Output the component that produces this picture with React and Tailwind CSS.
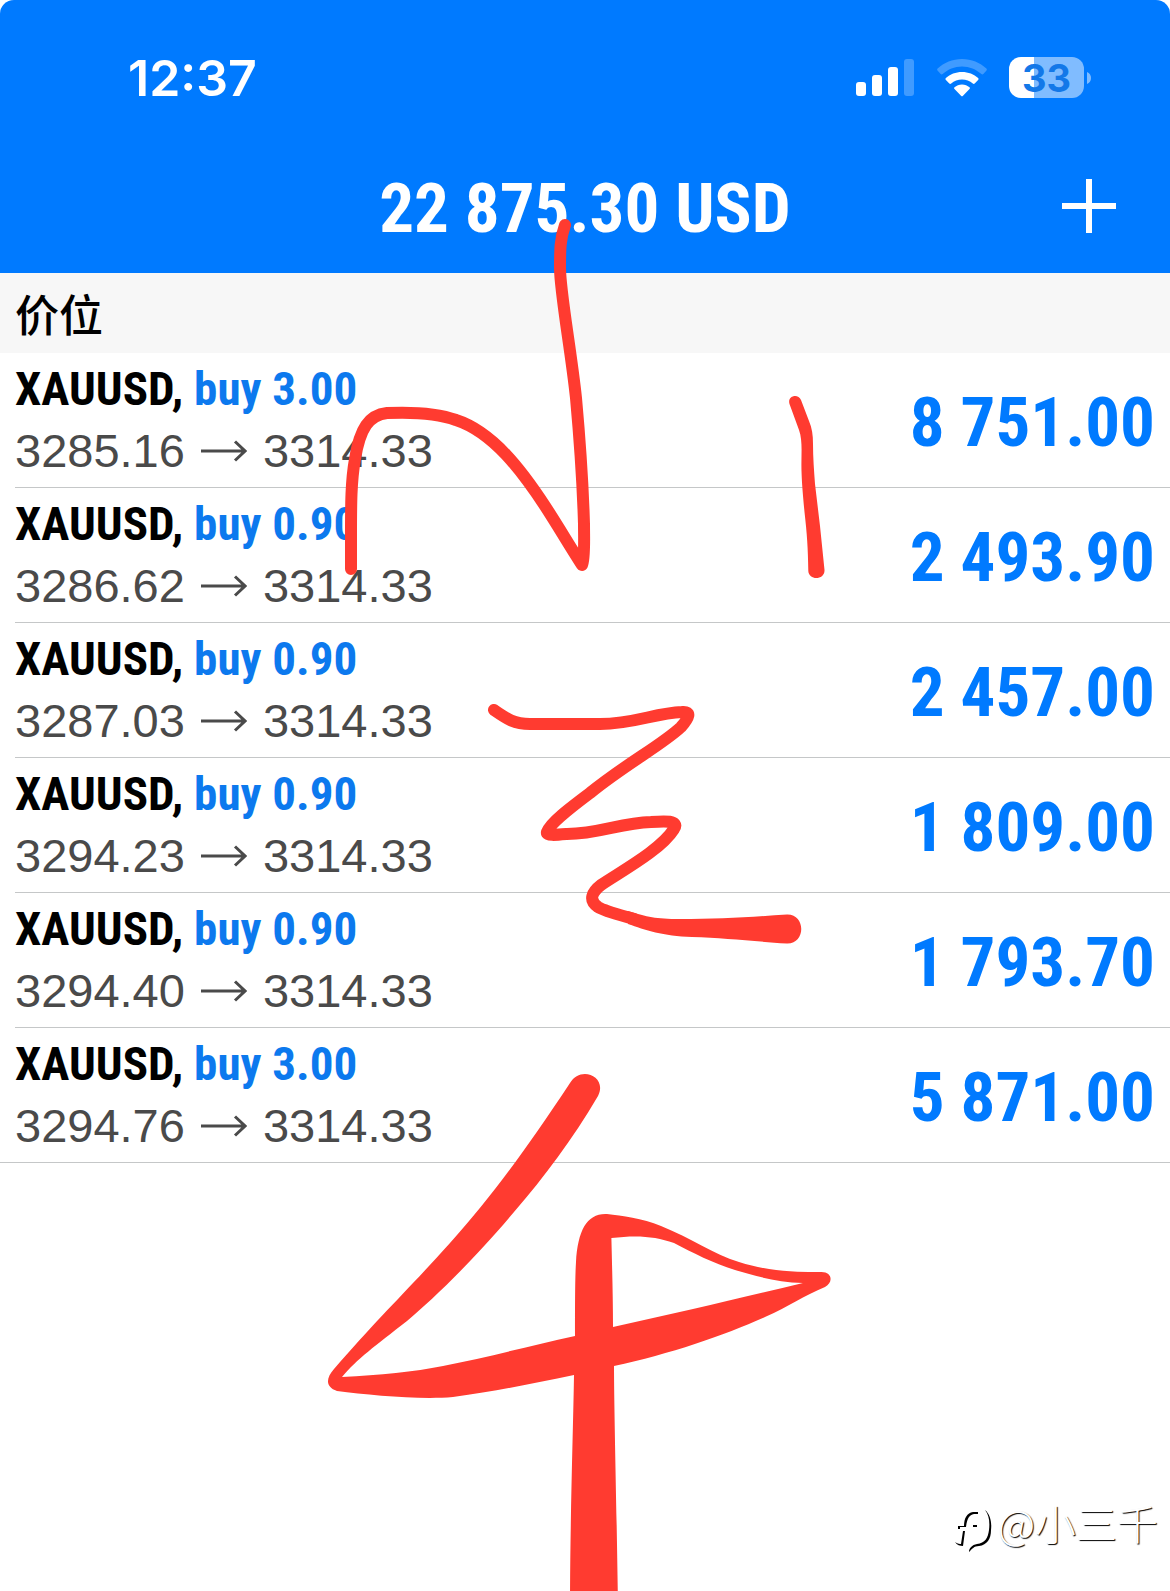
import React from "react";

const positions = [
  { id: 1, symbol: "XAUUSD", side: "buy 3.00", open: "3285.16", current: "3314.33", profit: "8 751.00" },
  { id: 2, symbol: "XAUUSD", side: "buy 0.90", open: "3286.62", current: "3314.33", profit: "2 493.90" },
  { id: 3, symbol: "XAUUSD", side: "buy 0.90", open: "3287.03", current: "3314.33", profit: "2 457.00" },
  { id: 4, symbol: "XAUUSD", side: "buy 0.90", open: "3294.23", current: "3314.33", profit: "1 809.00" },
  { id: 5, symbol: "XAUUSD", side: "buy 0.90", open: "3294.40", current: "3314.33", profit: "1 793.70" },
  { id: 6, symbol: "XAUUSD", side: "buy 3.00", open: "3294.76", current: "3314.33", profit: "5 871.00" },
];

const SignalIcon = () => (
  <svg width="58" height="38" viewBox="0 0 58 38" fill="white" aria-hidden="true">
    <rect x="0" y="23" width="10" height="14" rx="3" />
    <rect x="16" y="16" width="10" height="21" rx="3" />
    <rect x="32" y="8" width="10" height="29" rx="3" />
    <rect x="48" y="0" width="10" height="37" rx="3" opacity="0.25" />
  </svg>
);

const WifiIcon = () => (
  <svg width="50" height="38" viewBox="0 0 50 38" fill="white" aria-hidden="true">
    <path
      d="M25 0C15.500 0 7 3.500 .6 9.600C0 10.200 0 11 .5 11.600L3.700 15C4.300 15.600 5 15.600 5.600 15C10.800 10.200 17.600 7.400 25 7.400S39.200 10.200 44.400 15C45 15.600 45.700 15.600 46.300 15L49.500 11.600C50 11 50 10.200 49.400 9.600C43 3.500 34.500 0 25 0Z"
      opacity="0.25"
    />
    <path d="M25 13C18.700 13 13 15.300 8.900 19.100C8.300 19.700 8.300 20.400 8.900 21L12.300 24.500C12.900 25.100 13.600 25.100 14.200 24.600C17.100 22 20.900 20.500 25 20.500S32.900 22 35.800 24.600C36.400 25.100 37.100 25.100 37.700 24.500L41.100 21C41.700 20.400 41.700 19.700 41.100 19.100C37 15.300 31.300 13 25 13Z" />
    <path d="M25 25.500C22.100 25.500 19.500 26.600 17.500 28.300C16.900 28.900 16.900 29.500 17.500 30.100L24 36.700C24.700 37.400 25.300 37.400 26 36.700L32.500 30.100C33.100 29.500 33.100 28.900 32.500 28.300C30.500 26.600 27.900 25.500 25 25.500Z" />
  </svg>
);

const Battery = () => (
  <div className="flex items-center gap-[3px]">
    <div className="flex h-[41px] w-[75px] items-center justify-center rounded-xl bg-linear-to-r from-white from-33% to-[#80bcff] to-33% font-['Inter',sans-serif] text-[38px] leading-none font-bold text-[#1378e8]">
      33
    </div>
    <svg width="4" height="12" viewBox="0 0 4 12" fill="#80bcff" aria-hidden="true">
      <path d="M0 0C2.500 1 4 3.300 4 6S2.500 11 0 12Z" />
    </svg>
  </div>
);

const StatusBar = () => (
  <div className="flex h-[155px] items-center justify-between pr-[79px] pl-32">
    <time className="font-['Inter',sans-serif] text-[50px] leading-none font-semibold">12:37</time>
    <div className="flex items-center">
      <SignalIcon />
      <div className="mr-[22px] ml-[23px]">
        <WifiIcon />
      </div>
      <Battery />
    </div>
  </div>
);

const Header = () => (
  <header className="rounded-t-[14px] bg-[#007aff] text-white">
    <StatusBar />
    <div className="grid h-[118px] grid-cols-[1fr_auto_1fr] items-center px-[54px] pb-4">
      <h1 className="col-start-2 pt-1 text-[69px] leading-none font-bold whitespace-nowrap">22 875.30 USD</h1>
      <button type="button" aria-label="Add" className="justify-self-end">
        <svg width="54" height="54" viewBox="0 0 54 54" stroke="white" strokeWidth="6" aria-hidden="true">
          <path d="M27 0V54M0 27H54" />
        </svg>
      </button>
    </div>
  </header>
);

const PositionRow = ({ position }) => (
  <li className="group pl-[15px] last:pl-0">
    <div className="flex h-[135px] items-center justify-between border-b border-[#c5c7c8] pr-[15px] group-last:pl-[15px]">
      <div>
        <p className="text-[47px] leading-[62px] font-bold text-black">
          {position.symbol}, <span className="text-[#0c79ee]">{position.side}</span>
        </p>
        <p className="flex items-center gap-4 font-['Liberation_Sans',Arial,sans-serif] text-[47px] leading-[62px] text-[#4a4a4a]">
          {position.open}
          <svg width="46" height="22" viewBox="0 0 46 22" fill="none" stroke="currentColor" strokeWidth="3" aria-label="to">
            <path d="M0 11H44M34 1.500L44 11L34 20.500" />
          </svg>
          {position.current}
        </p>
      </div>
      <span className="pt-1 text-[69px] leading-none font-bold text-[#007aff]">{position.profit}</span>
    </div>
  </li>
);

// Freehand marks drawn over the list
const InkLayer = () => (
  <svg
    className="pointer-events-none absolute inset-x-0 top-0 w-full"
    viewBox="0 0 1170 1591"
    fill="none"
    stroke="#ff3b30"
    strokeWidth="12"
    strokeLinecap="round"
    strokeLinejoin="round"
    aria-hidden="true"
  >
    <path d="M351 569V535C351 505 351 481 355 459C360 428 369 415 387 413C410 412 437 413 456 420C493 432 522 471 545 506C558 526 571 548 582 565C585 559 584 539 584 524C583 490 580 442 576 398C571 350 560 292 560 268C560 250 560 239 565 225" />
    <path
      d="M789.500 404C787 396 798 393 801 400L809 421C812 428 813 435 813 444C813 457 814 471 815 484L820 526L824.500 570C825 580 809 581 808.300 571C808 548 807 534 804.500 512C803 495 802 486 801.500 471C801 454 803 441 799 430Z"
      fill="#ff3b30"
      stroke="none"
    />
    <path d="M494 710C507 719 514 724 530 724H600C634 724 655 713 682 712C692 711 689 718 681 727C662 745 627 763 590 793C570 808 550 823 547 832C546 836 556 835 567 834C599 834 620 823 651 822C664 821 680 820 674 829C661 850 620 872 601 885C592 892 588 900 598 907C604 911 620 915 634 919" />
    <path
      d="M628 911C648 917 655 919 680 919C718 919 750 917 787 914.500C806 914 806 944 787 943.500C750 941 724 938 692 937C663 936 645 930 628 924Z"
      fill="#ff3b30"
      stroke="none"
    />
    <path
      d="M570 1083C580 1065 608 1076 598 1096C572 1140 545 1176 514 1212C470 1264 434 1298 407 1321C375 1346 357 1359 342 1377C380 1375 414 1372 443 1366C488 1357 530 1346 575 1336C575 1306 575 1277 576 1262C578 1230 587 1213 607 1214C622 1216 642 1218 661 1226C691 1238 713 1254 739 1262C767 1271 791 1272 820 1272C832 1271 834 1282 825 1287C803 1296 790 1306 765 1317C725 1335 670 1354 614 1366C614 1407 617 1523 618 1610H570C570 1523 573 1436 574 1375C534 1383 499 1391 453 1397C420 1400 369 1395 337 1391C325 1387 326 1378 334 1369C380 1316 405 1293 450 1243C492 1196 525 1151 570 1083ZM611.400 1238C612 1265 613 1296 613 1327L693 1309C728 1301 765 1292 803 1283C776 1282 755 1276 735 1270C713 1263 693 1253 674 1243C655 1236 636 1235 611.400 1238Z"
      fill="#ff3b30"
      stroke="none"
    />
  </svg>
);

const Watermark = () => (
  <div className="absolute right-3 bottom-[38px] flex items-end text-white">
    <svg width="44" height="43" viewBox="0 0 44 43" fill="black" aria-hidden="true">
      <path d="M4 19V16H10C10 8 13 3 19 2H24V4H20C15 5 13 9 12 17H6V19Z" />
      <path d="M9 21H11L9 36C6 36 3 35 1 32C4 34 6 34 7 34Z" />
      <path d="M19 15H23V17H19Z" />
      <path d="M31 0C36 4 38 12 37 20C37 29 33 35 25 36C20 36 18 39 15 42C15 38 18 35 23 34C31 33 34 28 35 20C36 12 35 5 31 0Z" />
    </svg>
    <span className="font-['Noto_Sans_CJK_SC',sans-serif] text-[41px] leading-[62px] font-light [text-shadow:1px_1px_1px_black]">
      @小三千
    </span>
  </div>
);

const App = () => {
  return (
    <div className="relative min-h-screen overflow-hidden bg-white font-['Roboto_Condensed','Arial_Narrow',sans-serif]">
      <Header />
      <main>
        <h2 className="bg-[#f7f7f7] px-[15px] font-['Noto_Sans_CJK_SC',sans-serif] text-[44px] leading-[80px] font-medium text-black">
          价位
        </h2>
        <ul>
          {positions.map((position) => (
            <PositionRow key={position.id} position={position} />
          ))}
        </ul>
      </main>
      <InkLayer />
      <Watermark />
    </div>
  );
};

export default App;
